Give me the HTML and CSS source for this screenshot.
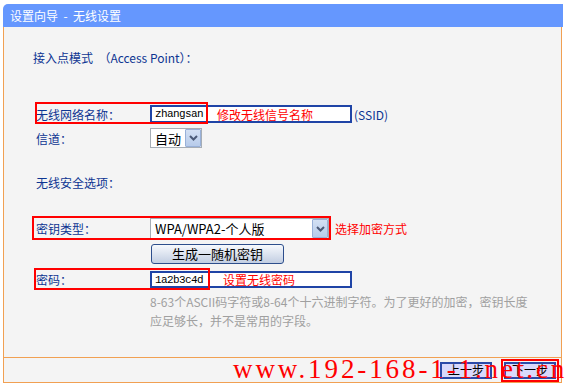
FILE: index.html
```html
<!doctype html>
<html lang="zh-CN">
<head>
<meta charset="utf-8">
<title>设置向导 - 无线设置</title>
<link rel="stylesheet" href="styles.css">
</head>
<body>

	<div class="wizard">

		<div class="wizard-title">设置向导 &nbsp;-&nbsp; 无线设置</div>

		<div class="wizard-body">

			<p class="section section-mode">接入点模式 &nbsp;（Access Point）：</p>

			<div class="row row-ssid">
				<span class="label">无线网络名称：</span>
				<span class="textbox"><span class="value">zhangsan</span><span class="note note-ssid">修改无线信号名称</span></span>
				<span class="hint">(SSID)</span>
				<span class="mark mark-ssid"></span>
			</div>

			<div class="row row-channel">
				<span class="label">信道：</span>
				<span class="select select-channel">
					<span class="select-text">自动</span>
					<span class="select-btn"><svg width="9" height="6" viewBox="0 0 9 6"><path d="M1 1 L4.5 4.5 L8 1" fill="none" stroke="#4b5a78" stroke-width="2"/></svg></span>
				</span>
			</div>

			<p class="section section-security">无线安全选项：</p>

			<div class="row row-key">
				<span class="label">密钥类型：</span>
				<span class="select select-key">
					<span class="select-text">WPA/WPA2-个人版</span>
					<span class="select-btn"><svg width="9" height="6" viewBox="0 0 9 6"><path d="M1 1 L4.5 4.5 L8 1" fill="none" stroke="#4b5a78" stroke-width="2"/></svg></span>
				</span>
				<span class="note note-key">选择加密方式</span>
				<span class="mark mark-key"></span>
			</div>

			<div class="row row-gen">
				<button class="btn-gen">生成一随机密钥</button>
			</div>

			<div class="row row-pass">
				<span class="label">密码：</span>
				<span class="textbox"><span class="value">1a2b3c4d</span><span class="note note-pass">设置无线密码</span></span>
				<span class="mark mark-pass"></span>
			</div>

			<p class="help">8-63个ASCII码字符或8-64个十六进制字符。为了更好的加密，密钥长度<br>应足够长，并不是常用的字段。</p>

		</div>

		<div class="wizard-foot">
			<button class="btn-step">上一步</button>
			<button class="btn-step btn-next">下一步</button>
		</div>

	</div>

	<div class="watermark">www.192-168-1-1.net.cn</div>

</body>
</html>
```

FILE: styles.css
```css
body { background: #fff; color: #0d3592; font: 12px "Noto Sans CJK SC", sans-serif; height: 388px; margin: 0; overflow: hidden; position: relative; }

.wizard { margin: 4px 0 0 3px; width: 560px; }
.wizard-title { background: #6597fe; border-top-left-radius: 5px; color: #fff; height: 23px; line-height: 23px; padding-left: 7px; }

.wizard-body { background: #f4f4f4; border: 1px solid #f1a052; border-top: none; height: 309px; padding: 21px 0 0 28px; width: 529px; }
.wizard-foot { align-items: center; background: #f4f4f4; border: 1px solid #f1a052; border-top: none; display: flex; gap: 12px; height: 24px; justify-content: flex-end; padding-right: 5px; width: 552px; }

.section { line-height: 20px; margin: 0; }
.section-mode { margin-left: 1px; }
.section-security { margin-top: 25px; padding-left: 4px; }

.row { align-items: center; display: flex; position: relative; }
.row-ssid { height: 18px; margin-top: 34px; padding-top: 3px; }
.row-channel { height: 20px; margin-top: 5px; }
.row-key { height: 21px; margin-top: 23px; padding-top: 2px; }
.row-gen { height: 20px; margin-top: 5px; padding-left: 119px; }
.row-pass { height: 17px; margin-top: 4px; padding-top: 3px; }

.label { box-sizing: border-box; padding-left: 4px; width: 118px; }

.textbox { align-items: center; background: #fff; border: 2px solid #1f44a6; box-sizing: border-box; display: flex; height: 100%; padding-left: 3px; width: 202px; }
.value { color: #000; font: 11px "Liberation Mono", monospace; letter-spacing: -0.6px; width: 48px; }
.note { color: #f00; font-size: 12px; }
.note-ssid { margin-left: 14px; }
.note-pass { margin-left: 20px; }
.note-key { margin-left: 6px; }
.hint { margin-left: 2px; }

.select { align-items: center; background: #fff; border: 1px solid #a6adb5; box-sizing: border-box; color: #000; display: flex; font-size: 13px; height: 100%; justify-content: space-between; padding-left: 4px; }
.select-channel { width: 52px; }
.select-key { width: 179px; }
.select-btn { align-items: center; background: linear-gradient(#d3e0f4, #b7cbea); border: 1px solid #98b0d8; border-radius: 1px; box-sizing: border-box; display: flex; height: 100%; justify-content: center; width: 16px; }

.btn-gen { background: linear-gradient(#f7f9fd, #c2cee2); border: 1px solid #2d4e8c; border-radius: 3px; color: #000; font: 13px "Noto Sans CJK SC", sans-serif; height: 20px; line-height: 16px; padding: 0; width: 133px; }

.help { color: #a0a0a0; line-height: 19px; margin: 4px 0 0; padding-left: 118px; }

.mark { border: 2px solid #f00; box-sizing: border-box; position: absolute; top: 0; }
.mark-ssid { height: 22px; left: 3px; width: 173px; }
.mark-key { height: 24px; left: 0; width: 299px; }
.mark-pass { height: 22px; left: 2px; width: 176px; }

.btn-step { background: #d9d9fb; border: 2px solid #2b4aa8; color: #000; font: 12px "Noto Sans CJK SC", sans-serif; height: 17px; line-height: 12px; padding: 0; width: 52px; }
.btn-next { outline: 2px solid #f00; outline-offset: 1px; }

.watermark { color: #f00; font: 27px "Liberation Serif", serif; left: 233px; letter-spacing: 2.9px; line-height: 27px; position: absolute; top: 356px; white-space: nowrap; }
```
